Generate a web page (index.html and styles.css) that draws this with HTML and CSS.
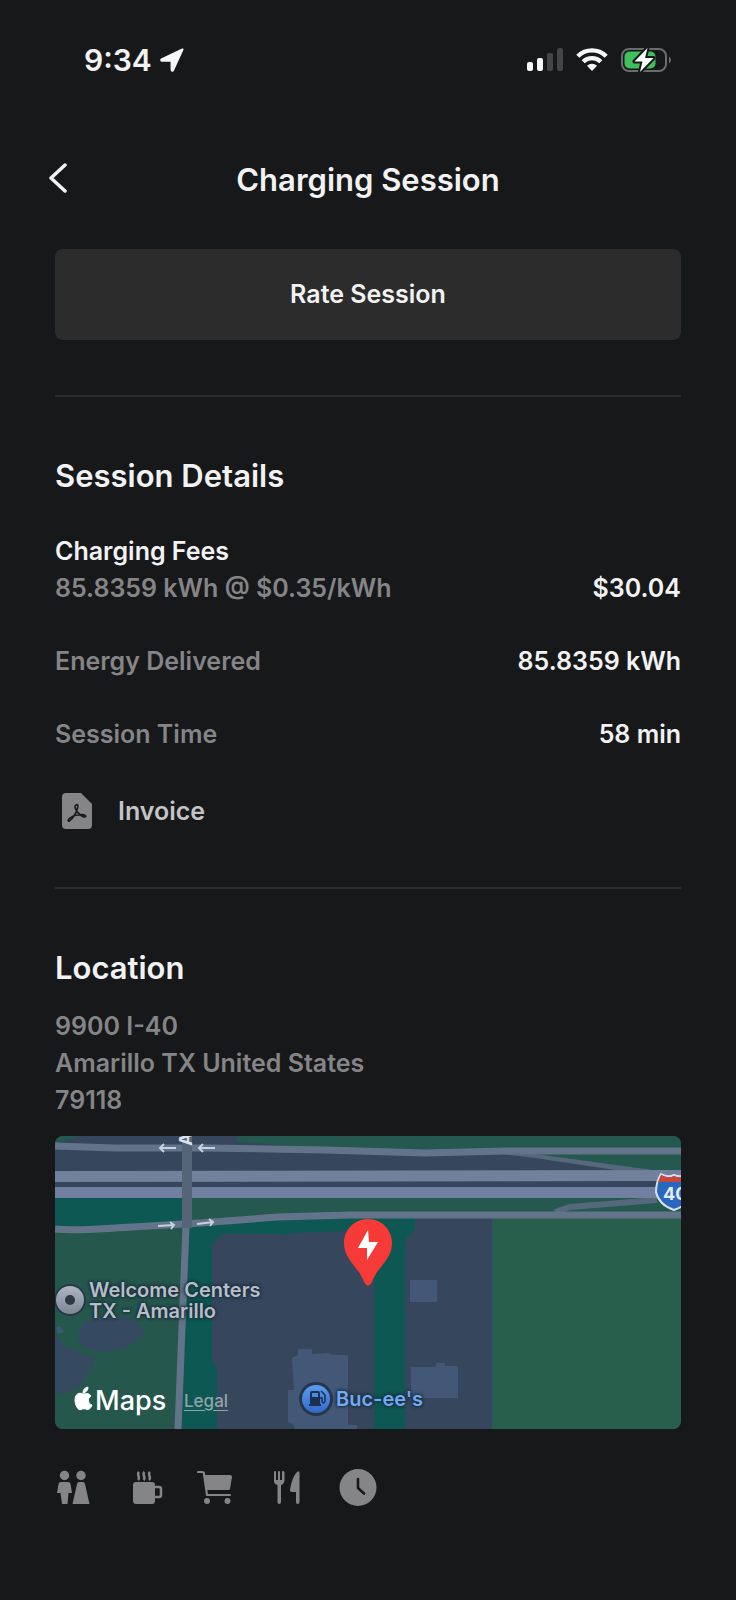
FILE: index.html
```html
<!DOCTYPE html>
<html lang="en">
<head>
    <meta charset="UTF-8">
    <meta name="viewport" content="width=device-width, initial-scale=1.0">
    <title>Charging Session</title>
    <link rel="stylesheet" href="styles.css">
</head>
<body>
    <div class="status-bar">
        <div class="status-left">
            <span class="time">9:34</span>
            <svg width="24" height="24" viewBox="0 0 24 24" fill="#f7f7f8" stroke="#f7f7f8" stroke-width="2" stroke-linejoin="round"><path d="M22.500 1.500L1.500 11.500C1 12 1.300 12.700 2 12.700L11.500 12.800L11.600 22C11.700 23 12.700 23 13 22.300Z"/></svg>
        </div>
        <div class="status-right">
            <svg width="36" height="24" viewBox="0 0 36 24" fill="#f7f7f8">
                <rect x="0" y="14" width="6" height="9" rx="2"/>
                <rect x="10" y="10" width="6" height="13" rx="2"/>
                <rect x="20" y="5" width="6" height="18" rx="2" fill="#444547"/>
                <rect x="30" y="0" width="6" height="23" rx="2" fill="#444547"/>
            </svg>
            <svg width="32" height="24" viewBox="0 0 32 24" fill="none" stroke="#f7f7f8" stroke-width="4.400">
                <path d="M1.800 8.200A20.200 20.200 0 0 1 30.200 8.200"/>
                <path d="M7.200 13.700A12.600 12.600 0 0 1 24.800 13.700"/>
                <path d="M11 17.800A7.200 7.200 0 0 1 21 17.800L16 23Z" fill="#f7f7f8" stroke="none"/>
            </svg>
            <svg width="50" height="26" viewBox="0 0 50 26">
                <rect x="1" y="2" width="44" height="22" rx="7" fill="none" stroke="#6b6c6e" stroke-width="2"/>
                <path d="M48 9.500Q50 10.500 50 13Q50 15.500 48 16.500Z" fill="#6b6c6e"/>
                <rect x="3.500" y="4.500" width="31" height="17" rx="5" fill="#3cc15c"/>
                <path d="M26.500 1L13.500 14.500H21.500L19 25L32.500 11H24Z" fill="#fff" stroke="#17181a" stroke-width="4" paint-order="stroke" stroke-linejoin="round"/>
            </svg>
        </div>
    </div>

    <header class="header">
        <button type="button" class="back-btn" aria-label="Back">
            <svg width="20" height="32" viewBox="0 0 20 32" fill="none" stroke="#f2f2f3" stroke-width="3.500" stroke-linecap="round" stroke-linejoin="round"><path d="M17 2L3 15L17 28"/></svg>
        </button>
        <h1>Charging Session</h1>
    </header>

    <main class="container">
        <button type="button" class="rate-btn">Rate Session</button>

        <section class="section">
            <h2>Session Details</h2>
            <dl class="details">
                <div class="row">
                    <dt><strong>Charging Fees</strong><br>85.8359 kWh @ $0.35/kWh</dt>
                    <dd>$30.04</dd>
                </div>
                <div class="row">
                    <dt>Energy Delivered</dt>
                    <dd>85.8359 kWh</dd>
                </div>
                <div class="row">
                    <dt>Session Time</dt>
                    <dd>58 min</dd>
                </div>
            </dl>
            <a class="invoice" href="#">
                <svg width="30" height="38" viewBox="0 0 30 38">
                    <path d="M4 1H19L30 12V33Q30 37 26 37H4Q0 37 0 33V5Q0 1 4 1Z" fill="#858587"/>
                    <path d="M14 13C17 11 16 18 12.500 23C9 29 5 31 6.500 27.500C8 25 14 23 20 22.500C26 23 24 27 19 23.500C15 21 11 14 14 13Z" fill="none" stroke="#17181a" stroke-width="1.600" stroke-linejoin="round"/>
                </svg>
                Invoice
            </a>
        </section>

        <section class="section">
            <h2>Location</h2>
            <address>9900 I-40<br>Amarillo TX United States<br>79118</address>

            <div class="map">
                <svg class="map-canvas" viewBox="0 0 626 293" preserveAspectRatio="xMinYMin slice">
                    <rect width="626" height="293" fill="#36475d"/>
                    <!-- grass -->
                    <path d="M0 0H25L0 8ZM182 0H626V34H598L448 18L370 16L270 12L182 6Z" fill="#25584f"/>
                    <path d="M0 62H626V80H0Z" fill="#25584f"/>
                    <path d="M137 62H295V79L222 81L137 88Z" fill="#25584f"/>
                    <path d="M0 62H130V92H0Z" fill="#0d5852"/>
                    <path d="M0 94L131 88L124 293H0Z" fill="#25574d"/>
                    <path d="M131 92L222 82L295 79H360V92Q359 96 355 98Q350 101 350 110V293H319V94L236 97L230 100L226 98H167L157 107V226L162 232V293H122Z" fill="#0d5852"/>
                    <rect x="437" y="80" width="189" height="213" fill="#285f4c"/>
                    <path d="M28 186Q50 178 78 183L92 197Q84 200 78 207Q66 216 50 215Q30 215 23 204ZM0 198L10 210L38 222L39 230Q32 234 29 246Q20 258 0 258Z" fill="#354960"/>
                    <path d="M1 191L5 190L9 196L3 198Z" fill="#3c5878"/>
                    <!-- buildings -->
                    <path d="M237 222L243 219V213H257V218L274 217L278 219H293V289H302V293H240L238 288L233 286V254H239ZM355 144H382V166H355ZM356 231H381V227H390V230H403V262H356Z" fill="#435876"/>
                    <!-- roads -->
                    <g fill="none" stroke="#63748a" stroke-width="7">
                        <path d="M448 18H480L598 34H560L480 22Z" fill="#56687c" stroke="none"/>
                        <path d="M500 76Q506 74 515 71L602 64" stroke="#56687c" stroke-width="6"/>
                        <path d="M0 10L60 12H150L270 14L370 17L450 15H626"/>
                        <path d="M0 93Q20 95 60 92L145 87L222 81L295 79H626"/>
                        <path d="M131 90L123 293"/>
                    </g>
                    <path d="M0 35L626 34V45L0 46Z" fill="#71809c"/>
                    <path d="M0 51H626V62H0Z" fill="#7180a1"/>
                    <path d="M127 0H137V92H127Z" fill="#566478"/>
                    <g fill="none" stroke="#c5d2de" stroke-width="2">
                        <path d="M121 12H105M109 8L105 12L109 16M160 12H144M148 8L144 12L148 16"/>
                        <path d="M103 90L119 89M115 86L119 89L116 93M142 88L158 86M154 83L158 86L155 90"/>
                    </g>
                    <text class="street" transform="translate(137 10) rotate(-90)">A</text>
                    <!-- interstate shield -->
                    <path d="M606 38Q613 42 619 39Q626 42 632 38Q638 46 637 56Q634 69 619 74Q604 69 601 56Q601 46 606 38Z" fill="#2867bd" stroke="#d8dfe8" stroke-width="2"/>
                    <path d="M606 39Q613 43 619 40Q626 43 632 39L635 46H603Z" fill="#c7463d"/>
                    <text class="shield" x="608" y="64">40</text>
                    <!-- welcome center -->
                    <circle cx="15" cy="164" r="16" fill="#26364a"/>
                    <circle cx="15" cy="164" r="14" fill="url(#grey)"/>
                    <circle cx="15" cy="164" r="5" fill="#2d3746"/>
                    <!-- gas station -->
                    <circle cx="261" cy="263" r="17" fill="#26364a"/>
                    <circle cx="261" cy="263" r="14" fill="url(#blue)"/>
                    <path d="M257 255H263Q265 255 265 257V268H266V270H254V268H255V257Q255 255 257 255ZM257 257V261H263V257Z" fill="#1d304f" fill-rule="evenodd"/>
                    <path d="M265 262H267V266Q269 268 270 265V259L266 255" fill="none" stroke="#1d304f" stroke-width="1.500"/>
                    <!-- charger pin -->
                    <path d="M313 83C299 83 289 94 289 107C289 124 304 131 309 146Q313 153 317 146C322 131 337 124 337 107C337 94 327 83 313 83Z" fill="#f63a38"/>
                    <path d="M313 94L303 112H312V124L323 106H314Z" fill="#fff"/>
                    <!-- apple logo -->
                    <path d="M33 251Q33 256 28 257Q28 252 33 251ZM28 258C30 258 33 256 36 260C32 262 33 268 37 269C36 272 34 274 32 273.500C30 272.500 28 272.500 26 273.500C23 275 20 269 20 264C20 258 24 256 28 258Z" fill="#fff" stroke="#fff"/>
                    <defs>
                        <linearGradient id="grey" x2="0" y2="1"><stop stop-color="#afb6c0"/><stop offset="1" stop-color="#7c8695"/></linearGradient>
                        <linearGradient id="blue" x2="0" y2="1"><stop stop-color="#5c9cf0"/><stop offset="1" stop-color="#3269c8"/></linearGradient>
                    </defs>
                </svg>
                <span class="label label-center">Welcome Centers<br>TX - Amarillo</span>
                <span class="label label-gas">Buc-ee's</span>
                <span class="label-maps">Maps</span>
                <a class="label-legal" href="#">Legal</a>
            </div>

            <ul class="amenities">
                <li><svg viewBox="0 0 38 38" role="img" aria-label="Restrooms">
                    <circle cx="9.500" cy="6.500" r="4.700"/><circle cx="26" cy="6.500" r="4.700"/>
                    <path d="M6 13H13Q15 13 15.500 15L17 24H13.500L12.500 35H7L5.500 24H2L3.500 15Q4 13 6 13ZM24 13H28Q29.500 13 30 15L34.500 35H17.500L22 15Q22.500 13 24 13Z"/>
                </svg></li>
                <li><svg viewBox="0 0 38 38" role="img" aria-label="Coffee">
                    <rect x="7" y="13" width="22" height="22" rx="3"/>
                    <path d="M28 18H33Q35 18 35 20V26Q35 28 33 28H28M13 3C10 6 15 8 12 11M18.500 3C15.500 6 20.500 8 17.500 11M24 3C21 6 26 8 23 11" fill="none" stroke="#858587" stroke-width="2.500"/>
                </svg></li>
                <li><svg viewBox="0 0 38 38" role="img" aria-label="Shopping">
                    <path d="M7 6H33Q35 6 35 8L33 20Q33 21 31 21H10Z"/>
                    <path d="M1 3H5Q7 3 7 5L10 26H33" fill="none" stroke="#858587" stroke-width="2.200" stroke-linecap="round" stroke-linejoin="round"/>
                    <circle cx="10" cy="32" r="3"/><circle cx="30.500" cy="32" r="3"/>
                </svg></li>
                <li><svg viewBox="0 0 38 38" role="img" aria-label="Food">
                    <path d="M6 3Q6 2 7 2Q8 2 8 3V11H10V3Q10 2 11 2Q12 2 12 3V11H14V3Q14 2 15 2Q16 2 16.500 3V12Q16 15 13 16V33Q13 35 11 35Q9.500 35 9.500 33V16Q6 15 6 12ZM29 3Q31.500 1 31.500 4V33Q31.500 35 29.500 35Q28 35 28 33V23H24Q22 23 22 21Q24 8 29 3Z"/>
                </svg></li>
                <li><svg viewBox="0 0 38 38" role="img" aria-label="Open 24 hours">
                    <circle cx="19" cy="18.500" r="18.500"/>
                    <path d="M19 10V19L25 24.500" fill="none" stroke="#17181a" stroke-width="2.600" stroke-linecap="round" stroke-linejoin="round"/>
                </svg></li>
            </ul>
        </section>
    </main>
</body>
</html>
```

FILE: styles.css
```css
* {
    box-sizing: border-box;
}

body {
    margin: 0;
    background-color: #17181a;
    color: #f2f2f3;
    font-family: Inter, "Liberation Sans", sans-serif;
    font-size: 25px;
    font-weight: 600;
    line-height: 37px;
}

svg {
    display: block;
    flex-shrink: 0;
}

button {
    border: none;
    color: inherit;
    font: inherit;
    cursor: pointer;
}

.status-bar {
    display: flex;
    justify-content: space-between;
    align-items: center;
    height: 120px;
    padding: 0 65px 0 84px;
}

.status-left {
    display: flex;
    align-items: center;
    gap: 8px;
}

.time {
    font-size: 30px;
}

.status-right {
    display: flex;
    align-items: center;
    gap: 13px;
}

.header {
    display: grid;
    grid-template-columns: 56px 1fr 56px;
    align-items: center;
    height: 118px;
    padding: 0 32px;
}

.back-btn {
    display: flex;
    padding: 12px 16px;
    background: none;
}

h1 {
    margin: 0;
    font-size: 31px;
    font-weight: 600;
    text-align: center;
}

.container {
    padding: 11px 55px 40px;
}

.rate-btn {
    display: block;
    width: 100%;
    padding: 27px;
    border-radius: 8px;
    background-color: #2c2c2c;
}

.section {
    margin-top: 55px;
    padding-top: 59px;
    border-top: 2px solid #2b2c2e;
}

h2 {
    margin: 0;
    font-size: 31px;
    font-weight: 600;
    line-height: 40px;
}

.details {
    display: grid;
    gap: 36px;
    margin: 37px 0 0;
}

.row {
    display: flex;
    justify-content: space-between;
    align-items: flex-end;
}

dt {
    color: #858587;
}

dt strong {
    color: #f2f2f3;
    font-weight: 600;
}

dd {
    margin: 0;
}

.invoice {
    display: flex;
    align-items: center;
    gap: 26px;
    margin-top: 39px;
    padding: 0 0 2px 7px;
    color: #c4c4c6;
    text-decoration: none;
}

address {
    margin-top: 20px;
    color: #858587;
    font-style: normal;
}

.map {
    position: relative;
    height: 293px;
    margin-top: 17px;
    border-radius: 8px;
    overflow: hidden;
}

.map-canvas {
    width: 100%;
    height: 100%;
}

.street {
    fill: #dbe4ee;
    font-size: 18px;
    font-weight: 700;
}

.shield {
    fill: #e3eaf2;
    font-size: 18px;
    font-weight: 700;
}

.label {
    position: absolute;
    font-size: 20px;
    font-weight: 600;
    line-height: 21px;
    white-space: nowrap;
    text-shadow: 0 0 3px #1f2d3d, 0 0 3px #1f2d3d, 0 0 4px #1f2d3d;
}

.label-center {
    top: 144px;
    left: 34px;
    color: #b4bfc8;
}

.label-gas {
    top: 253px;
    left: 281px;
    color: #6eabf7;
}

.label-maps {
    position: absolute;
    bottom: 10px;
    left: 40px;
    color: #fff;
    font-size: 27px;
    font-weight: 500;
}

.label-legal {
    position: absolute;
    bottom: 9px;
    left: 129px;
    color: #92a3a9;
    font-size: 17px;
    font-weight: 500;
    text-underline-offset: 3px;
}

.amenities {
    display: flex;
    gap: 33px;
    margin: 40px 0 0;
    padding: 0;
    list-style: none;
}

.amenities svg {
    width: 38px;
    height: 38px;
    fill: #858587;
}
```
